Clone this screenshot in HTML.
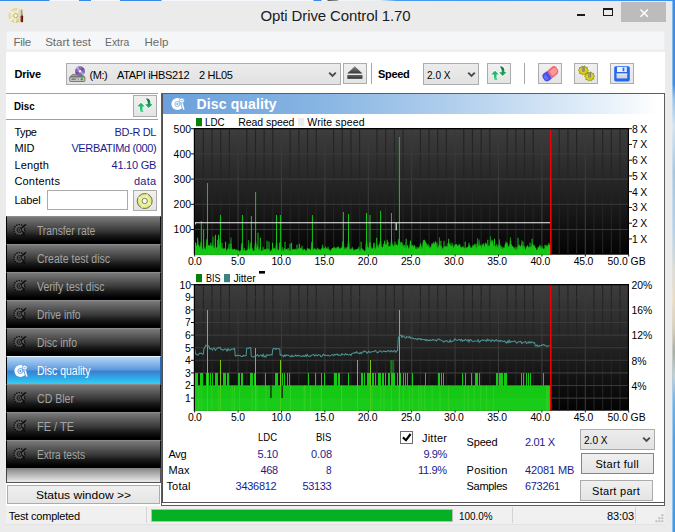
<!DOCTYPE html>
<html><head><meta charset="utf-8"><title>Opti Drive Control 1.70</title>
<style>
html,body{margin:0;padding:0}
body{width:675px;height:532px;position:relative;overflow:hidden;background:#ebebeb;font-family:"Liberation Sans",sans-serif;font-size:11px;color:#000}
.a{position:absolute;box-sizing:border-box}
.t{position:absolute;white-space:pre;line-height:16px;height:16px}
.btn{position:absolute;box-sizing:border-box;border:1px solid #acacac;background:linear-gradient(#f0f0f0,#e4e4e4)}
.nav{position:absolute;box-sizing:border-box;left:7px;width:154px;height:28px;border-top:1px solid #8c8c8c;border-left:1px solid #000;border-right:1px solid #111;background:linear-gradient(#7a7a7a 0%,#5a5a5a 25%,#3a3a3a 50%,#181818 70%,#000 92%)}
.nav.sel{border-top:1px solid #e4f6ff;border-left:1px solid #000;border-right:1px solid #2a6ab0;background:linear-gradient(#b4d4f4 0%,#86b6ea 25%,#5e98dc 47%,#3a7ed0 53%,#30a4e6 75%,#30d0f4 100%)}
svg{position:absolute;overflow:visible}
</style></head><body>
<div class="a" style="left:0;top:0;width:675px;height:1px;background:linear-gradient(90deg,#3a8ae8 0px,#3a8ae8 49px,#f4f7fb 50px,#f4f7fb 78.5px,#3a8ae8 79.5px,#3a8ae8 90.5px,#f4f7fb 91.5px,#f4f7fb 119.5px,#3a8ae8 120.5px,#3a8ae8 161px,#f4f7fb 162px,#f4f7fb 313px,#3a8ae8 314px,#3a8ae8 321px,#f4f7fb 322px,#f4f7fb 327px,#555 328px,#999 337px,#f4f7fb 339px,#e6f2ee 380px,#4a9af0 397px,#3a90f0 675px)"></div>
<div class="a" style="left:672px;top:0;width:1px;height:532px;opacity:0.55;background:linear-gradient(#3a8ef0 0,#3a8ef0 84px,#90c4f0 98px,#d0e4f4 126px,#a8c8e2 172px,#b4d2ea 230px,#ecdcc0 300px,#a6ada0 352px,#6ab4f0 402px,#3a9cf0 532px)"></div>
<div class="a" style="left:673px;top:0;width:2px;height:532px;background:linear-gradient(#3a8ef0 0,#3a8ef0 84px,#90c4f0 98px,#d0e4f4 126px,#bcd8ee 150px,#a8c8e2 172px,#b4d2ea 230px,#dcdcd2 270px,#ecdcc0 300px,#dccfb4 328px,#a6ada0 352px,#c6d2d6 376px,#6ab4f0 402px,#48a4f0 440px,#3a9cf0 532px)"></div>
<div class="a" style="left:621px;top:2px;width:45px;height:20px;background:#bcbcbc"></div>
<svg style="left:640px;top:8.6px" width="9" height="9" viewBox="0 0 9 9"><path d="M0.5 0.5 L7.9 7.7 M7.9 0.5 L0.5 7.7" stroke="#fff" stroke-width="1.5" fill="none"/></svg>
<div class="a" style="left:603px;top:8px;width:10px;height:8.4px;border:1px solid #1a1a1a;border-top-width:2.4px"></div>
<div class="a" style="left:577px;top:14px;width:8px;height:2.4px;background:#1a1a1a"></div>
<svg style="left:8px;top:8px" width="17" height="16" viewBox="0 0 17 16"><defs><radialGradient id="cdg" cx="0.42" cy="0.45" r="0.6"><stop offset="0" stop-color="#fbf6dc"/><stop offset="0.55" stop-color="#eadf9f"/><stop offset="1" stop-color="#cbbd7c"/></radialGradient></defs><circle cx="7.7" cy="7.6" r="7.3" fill="url(#cdg)"/><path d="M7.7 7.6 L1 4 L2.6 2.2 Z M7.7 7.6 L3 13.4 L1.6 11.6 Z M7.7 7.6 L9.4 0.6 L11.6 1.4 Z M7.7 7.6 L8 14.8 L5.8 14.6 Z" fill="#fffbe8" opacity="0.7"/><circle cx="7.7" cy="7.6" r="2" fill="#fafafa" stroke="#9c9c9c" stroke-width="0.9"/><path d="M10.6 2.2 L11.6 1.4 L11.9 13.8 L11 14.6 Z" fill="#f4f4f4" stroke="#c8c8c8" stroke-width="0.4"/><rect x="13.3" y="1.4" width="1.1" height="6.4" fill="#8a8a8a"/><rect x="12.7" y="7.4" width="2.4" height="6.8" rx="0.8" fill="#6e120e"/><rect x="13.1" y="7.8" width="0.7" height="6" fill="#a02a20"/></svg>
<div class="a" style="left:5.6px;top:31.4px;width:659.8px;height:19px;background:#f5f6f7;border:1px solid #f0f0f1"></div>
<div class="a" style="left:5.6px;top:50.4px;width:659.8px;height:473.4px;background:#fff"></div>
<div class="a" style="left:5.6px;top:50.4px;width:659.8px;height:1.2px;background:#ededed"></div>
<div class="btn" style="left:66px;top:63.4px;width:275.4px;height:21.2px;background:linear-gradient(#ececec,#e2e2e2)"></div>
<svg style="left:327.5px;top:72px" width="9" height="6" viewBox="0 0 9 6"><path d="M1.2 0.6 L4.5 4 L7.8 0.6" fill="none" stroke="#4a4a4a" stroke-width="1.9"/></svg>
<svg style="left:69px;top:66px" width="17" height="16" viewBox="0 0 17 16"><circle cx="11" cy="5.2" r="5" fill="#8468b4"/><path d="M11 5.2 L7 2.4 L9.4 0.6 Z M11 5.2 L15.4 7.4 L13.4 9.4 Z" fill="#c8b4e6" opacity="0.8"/><path d="M11 5.2 L13.8 1.2 L15.4 3.2 Z M11 5.2 L7.6 8.8 L6.2 6.6 Z" fill="#5e4888" opacity="0.7"/><circle cx="11" cy="5.2" r="1.3" fill="#f6f2fb"/><path d="M3.4 8.4 L8 8.4 L9 9.4 L14 9.4 L15.8 11.2 L0.8 11.2 Z" fill="#9a9a9a" stroke="#5a5a5a" stroke-width="0.6"/><rect x="0.7" y="11" width="15.2" height="4.4" rx="0.8" fill="#cfcfcf" stroke="#555" stroke-width="0.8"/><rect x="2.4" y="12.5" width="7.4" height="1.3" fill="#6a6a6a"/><rect x="6.6" y="12.7" width="2.6" height="0.9" fill="#eee"/><path d="M12.8 11.6 L14.4 13.2 L12.8 14.8 L11.2 13.2 Z" fill="#18b818"/></svg>
<div class="btn" style="left:343px;top:63px;width:24.4px;height:21px"></div>
<svg style="left:346.6px;top:66px" width="16" height="14" viewBox="0 0 16 14"><defs><linearGradient id="ej" x1="0" y1="0" x2="0" y2="1"><stop offset="0" stop-color="#8a8a8a"/><stop offset="1" stop-color="#333"/></linearGradient></defs><path d="M7.8 0.2 L15.4 7.6 L0.2 7.6 Z" fill="url(#ej)"/><rect x="0.4" y="9.2" width="15" height="3.6" fill="#333"/><rect x="0.4" y="10.4" width="15" height="0.8" fill="#6a6a6a"/></svg>
<div class="a" style="left:371.2px;top:63px;width:1.2px;height:21px;background:#a6a6a6"></div>
<div class="btn" style="left:423px;top:63.4px;width:56.4px;height:21.2px;background:linear-gradient(#ececec,#e2e2e2)"></div>
<svg style="left:466.6px;top:72px" width="9" height="6" viewBox="0 0 9 6"><path d="M1.2 0.6 L4.5 4 L7.8 0.6" fill="none" stroke="#4a4a4a" stroke-width="1.9"/></svg>
<div class="btn" style="left:487px;top:63px;width:24.4px;height:21px"></div>
<svg style="left:487px;top:63px" width="24" height="21" viewBox="0 0 24 21"><defs><linearGradient id="gu" x1="0" y1="0" x2="0" y2="1"><stop offset="0" stop-color="#1fb062"/><stop offset="0.6" stop-color="#2cc074"/><stop offset="1" stop-color="#58dc9c"/></linearGradient><linearGradient id="gd" x1="0" y1="0" x2="0" y2="1"><stop offset="0" stop-color="#0f5c32"/><stop offset="0.5" stop-color="#169a54"/><stop offset="1" stop-color="#1cac5e"/></linearGradient></defs><g stroke="#fff" stroke-width="1.3" stroke-linejoin="round" paint-order="stroke"><path d="M7.9 7.8 L11.9 11.6 L9.5 11.6 L9.6 15 L11 17.2 L7.6 17.2 L6.9 15 L6.9 11.6 L4 11.6 Z" fill="url(#gu)"/><path d="M15.6 13 L12.1 9.3 L14.7 9.3 L14.6 6.4 Q14 4.6 12.5 3.6 Q15.2 3.4 16.7 5 Q17.6 6.2 17.5 9.3 L19.7 9.3 Z" fill="url(#gd)"/></g></svg>
<div class="a" style="left:524px;top:63px;width:1.2px;height:21px;background:#a6a6a6"></div>
<div class="btn" style="left:538px;top:63px;width:24.2px;height:21px"></div>
<svg style="left:541px;top:65px" width="19" height="18" viewBox="0 0 19 18"><path d="M6.2 6 L11.4 1.6 Q13.4 0.4 15 2 L17.2 5.2 Q18 7.4 16.4 9 L10.8 13.4 Z" fill="#f4646e"/><path d="M8.2 6.4 L12.2 3 Q13.6 2.2 14.6 3.4 L16 5.6 Q16.4 7 15.4 8 L11.4 11.2 Z" fill="#fa969c"/><path d="M6.2 6 L10.8 13.4 L8 15.8 Q5.6 17.2 3.6 15.6 L1.6 12.6 Q0.6 10.2 2.6 8.6 Z" fill="#4650ec"/><path d="M4.6 9.6 L7.6 14 Q6 15.4 4.6 14.4 L3 12.2 Q2.8 10.6 4.6 9.6 Z" fill="#6a74f6"/></svg>
<div class="btn" style="left:574px;top:63px;width:24.2px;height:21px"></div>
<svg style="left:576.6px;top:65px" width="19" height="17" viewBox="0 0 19 17"><g fill="#d6cf1e" stroke="#8a8410" stroke-width="0.7" stroke-linejoin="round"><path d="M1.2 5.2 L2.6 4.2 L2.4 2.6 L4.2 2.6 L4.8 1 L6.4 1.8 L7.8 0.8 L8.6 2.4 L10.4 2.4 L10.2 4.2 L11.6 5.2 L10.4 6.4 L10.8 8 L9 8.2 L8.4 9.8 L6.8 9 L5.4 10 L4.4 8.6 L2.6 8.6 L2.8 6.8 Z"/><path d="M7.4 11.2 L8.8 10.2 L8.6 8.6 L10.4 8.6 L11 7 L12.6 7.8 L14 6.8 L14.8 8.4 L16.6 8.4 L16.4 10.2 L17.8 11.2 L16.6 12.4 L17 14 L15.2 14.2 L14.6 15.8 L13 15 L11.6 16 L10.6 14.6 L8.8 14.6 L9 12.8 Z"/></g><rect x="5.2" y="1.6" width="2.3" height="5" fill="#6a6a6a"/><rect x="5.6" y="1.6" width="0.8" height="4.6" fill="#bdbdbd"/><rect x="11.4" y="7.4" width="2.3" height="5" fill="#6a6a6a"/><rect x="11.8" y="7.4" width="0.8" height="4.6" fill="#bdbdbd"/></svg>
<div class="btn" style="left:610px;top:63px;width:24.2px;height:21px"></div>
<svg style="left:614px;top:66px" width="16" height="16" viewBox="0 0 16 16"><rect x="0.2" y="0.2" width="15.6" height="15.2" rx="1.6" fill="#2468f0"/><rect x="3" y="1" width="9.8" height="5" fill="#eef1f8"/><rect x="8.6" y="1.6" width="1.8" height="3.6" fill="#2a6af0"/><rect x="2.6" y="7.6" width="10.6" height="4.8" fill="#d5d7dc"/><rect x="2.6" y="7.6" width="10.6" height="1" fill="#f2f2f4"/></svg>
<div class="a" style="left:5.6px;top:93px;width:152.4px;height:1px;background:#a0a0a0"></div>
<div class="a" style="left:5.6px;top:119px;width:152.4px;height:1px;background:#a0a0a0"></div>
<div class="btn" style="left:133px;top:95.4px;width:24px;height:21.4px"></div>
<svg style="left:133px;top:95.4px" width="24" height="21" viewBox="0 0 24 21"><defs><linearGradient id="gu" x1="0" y1="0" x2="0" y2="1"><stop offset="0" stop-color="#1fb062"/><stop offset="0.6" stop-color="#2cc074"/><stop offset="1" stop-color="#58dc9c"/></linearGradient><linearGradient id="gd" x1="0" y1="0" x2="0" y2="1"><stop offset="0" stop-color="#0f5c32"/><stop offset="0.5" stop-color="#169a54"/><stop offset="1" stop-color="#1cac5e"/></linearGradient></defs><g stroke="#fff" stroke-width="1.3" stroke-linejoin="round" paint-order="stroke"><path d="M7.9 7.8 L11.9 11.6 L9.5 11.6 L9.6 15 L11 17.2 L7.6 17.2 L6.9 15 L6.9 11.6 L4 11.6 Z" fill="url(#gu)"/><path d="M15.6 13 L12.1 9.3 L14.7 9.3 L14.6 6.4 Q14 4.6 12.5 3.6 Q15.2 3.4 16.7 5 Q17.6 6.2 17.5 9.3 L19.7 9.3 Z" fill="url(#gd)"/></g></svg>
<div class="a" style="left:47px;top:190px;width:81.4px;height:19.6px;border:1px solid #ababab;background:#fff"></div>
<div class="btn" style="left:133.2px;top:190px;width:23.6px;height:21.4px"></div>
<svg style="left:133.2px;top:190px" width="24" height="22" viewBox="0 0 24 22"><defs><radialGradient id="cdy" cx="0.5" cy="0.5" r="0.5"><stop offset="0.35" stop-color="#f2f4a8"/><stop offset="0.8" stop-color="#e6ea8a"/><stop offset="1" stop-color="#d2d670"/></radialGradient></defs><circle cx="11.7" cy="11" r="7.5" fill="url(#cdy)" stroke="#55572c" stroke-width="0.8"/><path d="M11.7 11 L5 8 L5.6 6.4 Z M11.7 11 L18.4 14 L17.8 15.6 Z M11.7 11 L13.6 3.8 L15.2 4.6 Z M11.7 11 L9.8 18.2 L8.2 17.4 Z" fill="#fbfcd8" opacity="0.7"/><circle cx="11.7" cy="11" r="2.7" fill="#f4f6f0" stroke="#6e7a5a" stroke-width="0.9"/></svg>
<div class="nav" style="left:6.4px;top:216px;width:154.8px;height:28px"></div>
<svg style="left:13.4px;top:223.4px;opacity:1" width="15" height="14" viewBox="0 0 15 14"><circle cx="6.4" cy="7" r="5.4" fill="#6a6a6a" fill-opacity="0.55" stroke="#050505" stroke-width="1.3" stroke-dasharray="1.3 1.1"/><circle cx="6.4" cy="7" r="2.4" fill="none" stroke="#111" stroke-width="0.9"/><circle cx="6.4" cy="7" r="0.9" fill="#222"/><path d="M8 5.6 L13 1.2 M9.4 8 L11.6 12.8" stroke="#0a0a0a" stroke-width="1.3" fill="none"/></svg>
<div class="nav" style="left:6.4px;top:244px;width:154.8px;height:28px"></div>
<svg style="left:13.4px;top:251.4px;opacity:1" width="15" height="14" viewBox="0 0 15 14"><circle cx="6.4" cy="7" r="5.4" fill="#6a6a6a" fill-opacity="0.55" stroke="#050505" stroke-width="1.3" stroke-dasharray="1.3 1.1"/><circle cx="6.4" cy="7" r="2.4" fill="none" stroke="#111" stroke-width="0.9"/><circle cx="6.4" cy="7" r="0.9" fill="#222"/><path d="M8 5.6 L13 1.2 M9.4 8 L11.6 12.8" stroke="#0a0a0a" stroke-width="1.3" fill="none"/></svg>
<div class="nav" style="left:6.4px;top:272px;width:154.8px;height:28px"></div>
<svg style="left:13.4px;top:279.4px;opacity:1" width="15" height="14" viewBox="0 0 15 14"><circle cx="6.4" cy="7" r="5.4" fill="#6a6a6a" fill-opacity="0.55" stroke="#050505" stroke-width="1.3" stroke-dasharray="1.3 1.1"/><circle cx="6.4" cy="7" r="2.4" fill="none" stroke="#111" stroke-width="0.9"/><circle cx="6.4" cy="7" r="0.9" fill="#222"/><path d="M8 5.6 L13 1.2 M9.4 8 L11.6 12.8" stroke="#0a0a0a" stroke-width="1.3" fill="none"/></svg>
<div class="nav" style="left:6.4px;top:300px;width:154.8px;height:28px"></div>
<svg style="left:13.4px;top:307.4px;opacity:1" width="15" height="14" viewBox="0 0 15 14"><circle cx="6.4" cy="7" r="5.4" fill="#6a6a6a" fill-opacity="0.55" stroke="#050505" stroke-width="1.3" stroke-dasharray="1.3 1.1"/><circle cx="6.4" cy="7" r="2.4" fill="none" stroke="#111" stroke-width="0.9"/><circle cx="6.4" cy="7" r="0.9" fill="#222"/><path d="M8 5.6 L13 1.2 M9.4 8 L11.6 12.8" stroke="#0a0a0a" stroke-width="1.3" fill="none"/></svg>
<div class="nav" style="left:6.4px;top:328px;width:154.8px;height:28px"></div>
<svg style="left:13.4px;top:335.4px;opacity:1" width="15" height="14" viewBox="0 0 15 14"><circle cx="6.4" cy="7" r="5.4" fill="#6a6a6a" fill-opacity="0.55" stroke="#050505" stroke-width="1.3" stroke-dasharray="1.3 1.1"/><circle cx="6.4" cy="7" r="2.4" fill="none" stroke="#111" stroke-width="0.9"/><circle cx="6.4" cy="7" r="0.9" fill="#222"/><path d="M8 5.6 L13 1.2 M9.4 8 L11.6 12.8" stroke="#0a0a0a" stroke-width="1.3" fill="none"/></svg>
<div class="nav sel" style="left:6.4px;top:356px;width:154.8px;height:28px"></div>
<svg style="left:13.6px;top:364px;opacity:1" width="15" height="14" viewBox="0 0 15 14"><circle cx="6.4" cy="7" r="6" fill="#fff"/><circle cx="6.4" cy="7" r="2.5" fill="none" stroke="#4a8ad6" stroke-width="0.8"/><circle cx="6.4" cy="7" r="1" fill="#4a8ad6"/><path d="M10.6 6 L13.2 12.8" stroke="#4a8ad6" stroke-width="3" fill="none"/><path d="M10.9 6 L12.9 12.6" stroke="#fff" stroke-width="1.5" fill="none"/><circle cx="10.8" cy="3.6" r="2.5" fill="#fff" stroke="#4a8ad6" stroke-width="0.7"/><path d="M9.6 3.2 L10.4 4.4 L11 3 L11.8 4.2" stroke="#4a8ad6" stroke-width="0.5" fill="none"/></svg>
<div class="nav" style="left:6.4px;top:384px;width:154.8px;height:28px"></div>
<svg style="left:13.4px;top:391.4px;opacity:1" width="15" height="14" viewBox="0 0 15 14"><circle cx="6.4" cy="7" r="5.4" fill="#6a6a6a" fill-opacity="0.55" stroke="#050505" stroke-width="1.3" stroke-dasharray="1.3 1.1"/><circle cx="6.4" cy="7" r="2.4" fill="none" stroke="#111" stroke-width="0.9"/><circle cx="6.4" cy="7" r="0.9" fill="#222"/><path d="M8 5.6 L13 1.2 M9.4 8 L11.6 12.8" stroke="#0a0a0a" stroke-width="1.3" fill="none"/></svg>
<div class="nav" style="left:6.4px;top:412px;width:154.8px;height:28px"></div>
<svg style="left:13.4px;top:419.4px;opacity:1" width="15" height="14" viewBox="0 0 15 14"><circle cx="6.4" cy="7" r="5.4" fill="#6a6a6a" fill-opacity="0.55" stroke="#050505" stroke-width="1.3" stroke-dasharray="1.3 1.1"/><circle cx="6.4" cy="7" r="2.4" fill="none" stroke="#111" stroke-width="0.9"/><circle cx="6.4" cy="7" r="0.9" fill="#222"/><path d="M8 5.6 L13 1.2 M9.4 8 L11.6 12.8" stroke="#0a0a0a" stroke-width="1.3" fill="none"/></svg>
<div class="nav" style="left:6.4px;top:440px;width:154.8px;height:28px"></div>
<svg style="left:13.4px;top:447.4px;opacity:1" width="15" height="14" viewBox="0 0 15 14"><circle cx="6.4" cy="7" r="5.4" fill="#6a6a6a" fill-opacity="0.55" stroke="#050505" stroke-width="1.3" stroke-dasharray="1.3 1.1"/><circle cx="6.4" cy="7" r="2.4" fill="none" stroke="#111" stroke-width="0.9"/><circle cx="6.4" cy="7" r="0.9" fill="#222"/><path d="M8 5.6 L13 1.2 M9.4 8 L11.6 12.8" stroke="#0a0a0a" stroke-width="1.3" fill="none"/></svg>
<div class="a" style="left:6.4px;top:468px;width:154.8px;height:15px;background:linear-gradient(#7e7e7e,#8c8c8c 8%,#ececec);border-left:1px solid #444;border-right:1px solid #555;border-bottom:1.2px solid #555"></div>
<div class="btn" style="left:7px;top:485.4px;width:153.4px;height:18.4px"></div>
<div class="a" style="left:161px;top:93px;width:504px;height:413px;border:1px solid #5e5e5e;background:#fff"></div>
<div class="a" style="left:162px;top:94px;width:1.4px;height:409px;background:#505050"></div>
<div class="a" style="left:162px;top:502px;width:502px;height:1px;background:#555"></div>
<div class="a" style="left:163.4px;top:94px;width:500.6px;height:19.6px;background:linear-gradient(90deg,#6ba0da 0,#86b4e2 30%,#b4d1ee 60%,#e6f0fa 88%,#fff 99%)"></div>
<svg style="left:170.5px;top:96.9px;opacity:1" width="15" height="14" viewBox="0 0 15 14"><circle cx="6.4" cy="7" r="6" fill="#fff"/><circle cx="6.4" cy="7" r="2.5" fill="none" stroke="#6fa6dc" stroke-width="0.8"/><circle cx="6.4" cy="7" r="1" fill="#6fa6dc"/><path d="M10.6 6 L13.2 12.8" stroke="#6fa6dc" stroke-width="3" fill="none"/><path d="M10.9 6 L12.9 12.6" stroke="#fff" stroke-width="1.5" fill="none"/><circle cx="10.8" cy="3.6" r="2.5" fill="#fff" stroke="#6fa6dc" stroke-width="0.7"/><path d="M9.6 3.2 L10.4 4.4 L11 3 L11.8 4.2" stroke="#6fa6dc" stroke-width="0.5" fill="none"/></svg>
<div class="a" style="left:5.6px;top:506px;width:659.8px;height:18px;background:#f0f0f0"></div>
<div class="a" style="left:5.6px;top:524px;width:659.8px;height:1px;background:#e2e2e2"></div>
<div class="a" style="left:400px;top:431px;width:13px;height:13px;border:1px solid #6e6e6e;background:#fff"></div>
<svg style="left:400px;top:431px" width="13" height="13" viewBox="0 0 13 13"><path d="M2.9 6.4 L6 9.2 L10.6 3" fill="none" stroke="#000" stroke-width="2.1"/></svg>
<div class="btn" style="left:580px;top:429px;width:74.6px;height:20.6px;background:linear-gradient(#ececec,#e2e2e2)"></div>
<svg style="left:641.6px;top:437px" width="9" height="6" viewBox="0 0 9 6"><path d="M1.2 0.6 L4.5 4 L7.8 0.6" fill="none" stroke="#4a4a4a" stroke-width="1.9"/></svg>
<div class="btn" style="left:581px;top:453.4px;width:72.8px;height:20.4px;border:1.4px solid #3c96e8"></div>
<div class="btn" style="left:580px;top:480.4px;width:72.8px;height:20.4px"></div>
<div class="a" style="left:146px;top:507px;width:1px;height:16px;background:#d4d4d4"></div>
<div class="a" style="left:151px;top:509px;width:302px;height:13px;border:1px solid #bcbcbc;background:#06b025"></div>
<div class="a" style="left:512px;top:507px;width:1px;height:16px;background:#d4d4d4"></div>
<div class="a" style="left:635px;top:507px;width:1px;height:16px;background:#d4d4d4"></div>
<svg style="left:654px;top:513px" width="10" height="10" viewBox="0 0 10 10"><g fill="#bfbfbf"><rect x="7.4" y="1.2" width="2" height="2"/><rect x="4.4" y="4.2" width="2" height="2"/><rect x="7.4" y="4.2" width="2" height="2"/><rect x="1.4" y="7.2" width="2" height="2"/><rect x="4.4" y="7.2" width="2" height="2"/><rect x="7.4" y="7.2" width="2" height="2"/></g></svg>
<svg style="left:0;top:0" width="675" height="532" viewBox="0 0 675 532">
<defs><linearGradient id="bg" x1="0" y1="0" x2="0" y2="1"><stop offset="0" stop-color="#3d3d3d"/><stop offset="0.55" stop-color="#1f1f1f"/><stop offset="1" stop-color="#020202"/></linearGradient></defs>
<rect x="194.4" y="128.7" width="434" height="126" fill="url(#bg)"/>
<path d="M203.38 128.7 V254.7 M212.06 128.7 V254.7 M220.74 128.7 V254.7 M229.42 128.7 V254.7 M246.78 128.7 V254.7 M255.46 128.7 V254.7 M264.14 128.7 V254.7 M272.82 128.7 V254.7 M290.18 128.7 V254.7 M298.86 128.7 V254.7 M307.54 128.7 V254.7 M316.22 128.7 V254.7 M333.58 128.7 V254.7 M342.26 128.7 V254.7 M350.94 128.7 V254.7 M359.62 128.7 V254.7 M376.98 128.7 V254.7 M385.66 128.7 V254.7 M394.34 128.7 V254.7 M403.02 128.7 V254.7 M420.38 128.7 V254.7 M429.06 128.7 V254.7 M437.74 128.7 V254.7 M446.42 128.7 V254.7 M463.78 128.7 V254.7 M472.46 128.7 V254.7 M481.14 128.7 V254.7 M489.82 128.7 V254.7 M507.18 128.7 V254.7 M515.86 128.7 V254.7 M524.54 128.7 V254.7 M533.22 128.7 V254.7 M550.58 128.7 V254.7 M559.26 128.7 V254.7 M567.94 128.7 V254.7 M576.62 128.7 V254.7 M593.98 128.7 V254.7 M602.66 128.7 V254.7 M611.34 128.7 V254.7 M620.02 128.7 V254.7" stroke="#242424" stroke-width="1.1" fill="none"/>
<path d="M238.10 128.7 V254.7 M281.50 128.7 V254.7 M324.90 128.7 V254.7 M368.30 128.7 V254.7 M411.70 128.7 V254.7 M455.10 128.7 V254.7 M498.50 128.7 V254.7 M541.90 128.7 V254.7 M585.30 128.7 V254.7 M194.4 229.50 H628.4 M194.4 204.30 H628.4 M194.4 179.10 H628.4 M194.4 153.90 H628.4" stroke="#3a3a3a" stroke-width="1.1" fill="none"/>
<path d="M195.0 254.7 L195.0 242.6 L195.5 242.7 L196.0 243.1 L196.5 246.1 L197.0 246.1 L197.5 245.5 L198.0 244.3 L198.5 245.2 L199.0 245.5 L199.5 247.3 L200.0 247.3 L200.5 244.6 L201.0 241.7 L201.5 244.6 L202.0 249.2 L202.5 249.8 L203.0 247.2 L203.5 239.6 L204.0 246.6 L204.5 248.6 L205.0 249.1 L205.5 249.5 L206.0 246.8 L206.5 239.2 L207.0 241.9 L207.5 240.3 L208.0 245.7 L208.5 245.6 L209.0 245.1 L209.5 245.2 L210.0 246.8 L210.5 245.2 L211.0 246.5 L211.5 245.9 L212.0 245.5 L212.5 245.7 L213.0 236.4 L213.5 248.0 L214.0 247.8 L214.5 248.5 L215.0 245.7 L215.5 247.7 L216.0 247.2 L216.5 247.8 L217.0 248.6 L217.5 246.4 L218.0 245.7 L218.5 248.0 L219.0 247.0 L219.5 242.8 L220.0 238.4 L220.5 242.8 L221.0 247.1 L221.5 249.1 L222.0 248.8 L222.5 247.8 L223.0 248.9 L223.5 248.6 L224.0 249.4 L224.5 248.2 L225.0 248.8 L225.5 248.8 L226.0 250.3 L226.5 251.4 L227.0 249.4 L227.5 249.0 L228.0 249.2 L228.5 247.5 L229.0 250.1 L229.5 249.5 L230.0 248.7 L230.5 249.1 L231.0 237.5 L231.5 249.2 L232.0 248.4 L232.5 249.9 L233.0 249.8 L233.5 249.4 L234.0 249.0 L234.5 249.2 L235.0 248.9 L235.5 250.4 L236.0 249.5 L236.5 249.8 L237.0 250.5 L237.5 250.2 L238.0 251.1 L238.5 250.7 L239.0 250.3 L239.5 251.8 L240.0 251.3 L240.5 251.1 L241.0 249.9 L241.5 243.5 L242.0 243.4 L242.5 243.2 L243.0 250.1 L243.5 251.2 L244.0 249.3 L244.5 248.0 L245.0 251.1 L245.5 250.7 L246.0 250.8 L246.5 250.5 L247.0 250.2 L247.5 249.9 L248.0 248.0 L248.5 240.1 L249.0 249.6 L249.5 248.9 L250.0 248.4 L250.5 243.1 L251.0 242.4 L251.5 243.1 L252.0 249.2 L252.5 248.4 L253.0 251.0 L253.5 250.9 L254.0 250.7 L254.5 250.0 L255.0 242.8 L255.5 242.1 L256.0 241.9 L256.5 249.3 L257.0 248.1 L257.5 244.8 L258.0 248.1 L258.5 249.6 L259.0 250.7 L259.5 249.6 L260.0 247.0 L260.5 249.6 L261.0 251.1 L261.5 251.0 L262.0 250.6 L262.5 250.4 L263.0 246.7 L263.5 249.9 L264.0 250.2 L264.5 249.3 L265.0 249.3 L265.5 249.3 L266.0 249.3 L266.5 250.5 L267.0 248.4 L267.5 250.5 L268.0 248.8 L268.5 250.6 L269.0 248.8 L269.5 250.8 L270.0 250.8 L270.5 251.8 L271.0 250.3 L271.5 250.9 L272.0 248.9 L272.5 249.3 L273.0 248.8 L273.5 248.8 L274.0 248.1 L274.5 248.1 L275.0 249.1 L275.5 251.3 L276.0 243.7 L276.5 242.5 L277.0 242.8 L277.5 248.7 L278.0 250.4 L278.5 250.1 L279.0 249.7 L279.5 242.8 L280.0 242.4 L280.5 242.8 L281.0 251.9 L281.5 251.1 L282.0 250.3 L282.5 247.1 L283.0 251.6 L283.5 250.7 L284.0 248.5 L284.5 248.8 L285.0 248.8 L285.5 249.1 L286.0 250.2 L286.5 249.1 L287.0 249.4 L287.5 250.0 L288.0 247.8 L288.5 248.8 L289.0 251.3 L289.5 250.8 L290.0 249.8 L290.5 251.4 L291.0 250.6 L291.5 249.3 L292.0 250.4 L292.5 249.6 L293.0 249.0 L293.5 249.1 L294.0 249.9 L294.5 249.7 L295.0 249.1 L295.5 248.8 L296.0 250.1 L296.5 250.3 L297.0 249.2 L297.5 249.2 L298.0 249.4 L298.5 248.3 L299.0 248.8 L299.5 248.7 L300.0 247.5 L300.5 248.1 L301.0 249.2 L301.5 248.3 L302.0 248.8 L302.5 250.4 L303.0 249.3 L303.5 250.5 L304.0 249.6 L304.5 248.8 L305.0 249.8 L305.5 250.4 L306.0 251.6 L306.5 250.2 L307.0 249.5 L307.5 247.8 L308.0 248.7 L308.5 249.1 L309.0 248.7 L309.5 249.0 L310.0 249.3 L310.5 250.4 L311.0 249.4 L311.5 242.8 L312.0 241.8 L312.5 242.8 L313.0 248.6 L313.5 249.3 L314.0 250.0 L314.5 248.1 L315.0 248.6 L315.5 249.2 L316.0 249.7 L316.5 249.3 L317.0 250.7 L317.5 248.3 L318.0 247.7 L318.5 249.8 L319.0 249.1 L319.5 249.9 L320.0 249.2 L320.5 250.8 L321.0 249.4 L321.5 248.3 L322.0 248.7 L322.5 244.6 L323.0 246.8 L323.5 249.2 L324.0 248.5 L324.5 248.8 L325.0 247.9 L325.5 246.6 L326.0 248.3 L326.5 248.3 L327.0 248.8 L327.5 249.2 L328.0 246.6 L328.5 248.7 L329.0 250.1 L329.5 249.7 L330.0 249.6 L330.5 251.5 L331.0 250.7 L331.5 249.1 L332.0 248.3 L332.5 248.5 L333.0 247.7 L333.5 247.9 L334.0 247.2 L334.5 246.9 L335.0 248.5 L335.5 247.9 L336.0 249.8 L336.5 247.7 L337.0 247.2 L337.5 247.3 L338.0 247.5 L338.5 246.4 L339.0 248.5 L339.5 248.7 L340.0 248.7 L340.5 248.3 L341.0 248.0 L341.5 247.2 L342.0 248.4 L342.5 241.9 L343.0 241.1 L343.5 241.9 L344.0 250.1 L344.5 248.7 L345.0 247.3 L345.5 248.4 L346.0 249.5 L346.5 248.1 L347.0 247.1 L347.5 247.7 L348.0 242.5 L348.5 240.2 L349.0 242.5 L349.5 248.1 L350.0 249.8 L350.5 248.9 L351.0 250.0 L351.5 249.1 L352.0 247.6 L352.5 247.5 L353.0 249.1 L353.5 249.9 L354.0 250.7 L354.5 249.8 L355.0 249.4 L355.5 249.3 L356.0 250.0 L356.5 249.6 L357.0 249.1 L357.5 248.8 L358.0 249.2 L358.5 248.5 L359.0 246.5 L359.5 250.5 L360.0 251.6 L360.5 250.3 L361.0 248.6 L361.5 248.0 L362.0 248.3 L362.5 249.3 L363.0 250.3 L363.5 249.7 L364.0 250.4 L364.5 251.9 L365.0 250.5 L365.5 250.6 L366.0 242.2 L366.5 238.5 L367.0 242.2 L367.5 246.9 L368.0 247.2 L368.5 248.1 L369.0 248.9 L369.5 242.8 L370.0 242.3 L370.5 242.8 L371.0 247.8 L371.5 247.6 L372.0 249.2 L372.5 249.0 L373.0 247.8 L373.5 247.4 L374.0 243.4 L374.5 248.3 L375.0 248.2 L375.5 249.4 L376.0 246.8 L376.5 246.9 L377.0 244.3 L377.5 245.9 L378.0 247.6 L378.5 247.8 L379.0 244.2 L379.5 245.1 L380.0 241.5 L380.5 240.8 L381.0 241.5 L381.5 246.3 L382.0 246.8 L382.5 247.5 L383.0 246.9 L383.5 243.7 L384.0 244.9 L384.5 243.8 L385.0 244.7 L385.5 244.5 L386.0 243.4 L386.5 244.6 L387.0 246.1 L387.5 247.8 L388.0 247.2 L388.5 246.4 L389.0 247.0 L389.5 245.9 L390.0 246.1 L390.5 246.3 L391.0 242.2 L391.5 238.9 L392.0 242.2 L392.5 245.0 L393.0 244.9 L393.5 247.6 L394.0 245.5 L394.5 245.2 L395.0 245.7 L395.5 244.7 L396.0 244.0 L396.5 244.5 L397.0 245.6 L397.5 245.8 L398.0 244.7 L398.5 238.9 L399.0 241.6 L399.5 240.3 L400.0 247.0 L400.5 242.3 L401.0 242.6 L401.5 241.8 L402.0 244.6 L402.5 245.5 L403.0 245.9 L403.5 245.3 L404.0 248.4 L404.5 244.7 L405.0 245.1 L405.5 247.9 L406.0 247.5 L406.5 248.9 L407.0 245.9 L407.5 245.0 L408.0 246.2 L408.5 248.9 L409.0 248.4 L409.5 246.6 L410.0 243.4 L410.5 240.7 L411.0 243.4 L411.5 246.1 L412.0 245.8 L412.5 245.0 L413.0 246.8 L413.5 247.4 L414.0 244.8 L414.5 246.1 L415.0 245.9 L415.5 248.8 L416.0 248.9 L416.5 249.2 L417.0 246.6 L417.5 248.8 L418.0 248.3 L418.5 248.7 L419.0 246.8 L419.5 248.3 L420.0 244.6 L420.5 243.1 L421.0 246.2 L421.5 246.0 L422.0 249.7 L422.5 245.6 L423.0 242.0 L423.5 240.0 L424.0 240.3 L424.5 242.2 L425.0 242.3 L425.5 241.3 L426.0 244.0 L426.5 243.1 L427.0 246.5 L427.5 245.5 L428.0 244.0 L428.5 247.2 L429.0 245.2 L429.5 247.6 L430.0 248.4 L430.5 246.9 L431.0 247.0 L431.5 244.7 L432.0 243.2 L432.5 244.8 L433.0 243.6 L433.5 241.9 L434.0 244.3 L434.5 243.7 L435.0 242.6 L435.5 241.0 L436.0 242.4 L436.5 245.9 L437.0 246.6 L437.5 247.8 L438.0 247.9 L438.5 246.3 L439.0 244.8 L439.5 237.4 L440.0 246.4 L440.5 246.1 L441.0 245.3 L441.5 246.4 L442.0 247.5 L442.5 250.0 L443.0 247.8 L443.5 247.7 L444.0 248.0 L444.5 246.3 L445.0 247.3 L445.5 245.7 L446.0 247.3 L446.5 246.6 L447.0 247.4 L447.5 245.4 L448.0 242.9 L448.5 244.4 L449.0 243.2 L449.5 244.4 L450.0 243.3 L450.5 245.3 L451.0 246.0 L451.5 246.7 L452.0 246.1 L452.5 245.7 L453.0 244.7 L453.5 247.9 L454.0 247.5 L454.5 246.1 L455.0 244.6 L455.5 244.7 L456.0 243.9 L456.5 244.1 L457.0 245.6 L457.5 245.9 L458.0 245.5 L458.5 246.3 L459.0 244.3 L459.5 244.9 L460.0 244.3 L460.5 248.1 L461.0 246.9 L461.5 247.9 L462.0 247.0 L462.5 247.2 L463.0 246.1 L463.5 247.8 L464.0 248.0 L464.5 247.7 L465.0 248.6 L465.5 248.9 L466.0 247.8 L466.5 248.2 L467.0 246.9 L467.5 247.4 L468.0 247.2 L468.5 245.3 L469.0 242.8 L469.5 246.3 L470.0 245.4 L470.5 247.8 L471.0 248.0 L471.5 247.7 L472.0 247.5 L472.5 246.8 L473.0 245.1 L473.5 246.0 L474.0 245.7 L474.5 244.0 L475.0 244.3 L475.5 245.6 L476.0 248.4 L476.5 247.3 L477.0 248.0 L477.5 238.1 L478.0 246.1 L478.5 246.1 L479.0 239.5 L479.5 244.5 L480.0 246.1 L480.5 246.2 L481.0 244.5 L481.5 249.2 L482.0 245.4 L482.5 244.8 L483.0 243.8 L483.5 243.3 L484.0 246.1 L484.5 247.4 L485.0 244.1 L485.5 242.4 L486.0 245.0 L486.5 243.6 L487.0 244.2 L487.5 247.8 L488.0 245.0 L488.5 245.8 L489.0 247.0 L489.5 245.7 L490.0 244.7 L490.5 236.4 L491.0 243.2 L491.5 241.5 L492.0 239.8 L492.5 240.6 L493.0 241.8 L493.5 245.5 L494.0 246.3 L494.5 247.5 L495.0 246.0 L495.5 245.7 L496.0 247.4 L496.5 244.1 L497.0 245.1 L497.5 246.6 L498.0 248.7 L498.5 244.9 L499.0 244.4 L499.5 239.3 L500.0 246.8 L500.5 245.4 L501.0 249.0 L501.5 246.7 L502.0 246.2 L502.5 248.8 L503.0 248.9 L503.5 247.3 L504.0 248.3 L504.5 247.7 L505.0 244.6 L505.5 243.6 L506.0 241.6 L506.5 243.3 L507.0 243.9 L507.5 242.8 L508.0 248.0 L508.5 246.0 L509.0 247.4 L509.5 245.1 L510.0 243.4 L510.5 237.3 L511.0 245.7 L511.5 244.0 L512.0 246.0 L512.5 246.5 L513.0 246.1 L513.5 247.6 L514.0 248.7 L514.5 247.5 L515.0 249.8 L515.5 249.3 L516.0 246.7 L516.5 249.1 L517.0 250.6 L517.5 247.1 L518.0 247.0 L518.5 246.6 L519.0 244.3 L519.5 245.0 L520.0 246.2 L520.5 247.3 L521.0 245.3 L521.5 245.3 L522.0 240.4 L522.5 248.5 L523.0 247.1 L523.5 245.4 L524.0 249.1 L524.5 246.0 L525.0 249.2 L525.5 250.1 L526.0 248.4 L526.5 246.7 L527.0 246.3 L527.5 245.4 L528.0 246.1 L528.5 247.0 L529.0 248.2 L529.5 246.9 L530.0 246.9 L530.5 246.9 L531.0 247.0 L531.5 246.5 L532.0 243.8 L532.5 243.5 L533.0 244.8 L533.5 245.5 L534.0 246.4 L534.5 244.8 L535.0 247.7 L535.5 247.5 L536.0 248.2 L536.5 250.9 L537.0 249.5 L537.5 249.5 L538.0 246.7 L538.5 247.9 L539.0 247.4 L539.5 245.7 L540.0 244.7 L540.5 246.9 L541.0 248.6 L541.5 248.4 L542.0 245.7 L542.5 248.3 L543.0 248.8 L543.5 248.7 L544.0 249.2 L544.5 248.4 L545.0 249.3 L545.5 245.6 L546.0 247.0 L546.5 245.0 L547.0 247.1 L547.5 246.2 L548.0 244.9 L548.5 244.5 L549.0 242.9 L549.5 245.3 L550.0 245.2 L550.5 244.8 L550.4 254.7 Z" fill="#14c814" stroke="#14c814" stroke-width="0.4" stroke-linejoin="round"/>
<path d="M207.5 254.7 V182.9 M201.3 254.7 V220.9 M220.4 254.7 V215.1 M242.4 254.7 V215.1 M251.4 254.7 V215.9 M255.6 254.7 V191.9 M276.5 254.7 V215.1 M280.4 254.7 V215.1 M312.4 254.7 V215.1 M343.4 254.7 V211.9 M348.5 254.7 V214.1 M366.5 254.7 V213.1 M370.0 254.7 V215.1 M380.6 254.7 V210.8 M391.5 254.7 V213.1 M399.4 254.7 V137.1 M197.6 254.7 V237.7 M203.6 254.7 V229.7 M215.5 254.7 V234.7 M218.5 254.7 V234.7 M222.0 254.7 V242.7 M258.0 254.7 V232.7 M229.0 254.7 V243.7 M210.8 254.7 V242.7 M267.0 254.7 V240.7 M272.5 254.7 V242.7 M285.0 254.7 V241.7 M290.0 254.7 V243.7 M297.0 254.7 V244.7 M302.0 254.7 V245.7 M384.5 254.7 V240.7 M388.0 254.7 V241.7 M374.0 254.7 V242.7 M395.0 254.7 V241.7 M402.0 254.7 V242.7 M406.0 254.7 V241.7 M444.0 254.7 V240.7 M448.5 254.7 V241.7 M452.0 254.7 V242.7 M437.0 254.7 V242.7 M494.5 254.7 V238.7 M518.0 254.7 V237.7 M523.0 254.7 V241.7 M530.0 254.7 V242.7 M476.0 254.7 V243.7 M545.0 254.7 V244.7 M197.9 254.7 V240.7 M215.2 254.7 V236.7 M217.8 254.7 V239.7 M225.6 254.7 V241.7 M230.9 254.7 V243.7 M260.4 254.7 V237.7 M269.0 254.7 V241.7 M272.5 254.7 V242.7 M291.6 254.7 V242.7 M299.4 254.7 V243.7 M361.1 254.7 V241.7 M376.7 254.7 V237.7 M387.1 254.7 V239.7 M406.2 254.7 V238.7 M410.5 254.7 V240.7 M424.4 254.7 V239.7 M440.9 254.7 V240.7 M448.7 254.7 V238.7 M465.2 254.7 V241.7 M487.8 254.7 V239.7 M510.4 254.7 V240.7 M532.1 254.7 V238.7" stroke="#16c016" stroke-width="1.05" fill="none"/>
<path d="M195.2 224.4 V222.8 H396.2 V230.2 M396.2 222.8 H550.4" stroke="#f6f6f6" stroke-width="1.1" fill="none"/>
<rect x="550" y="128.7" width="1.5" height="126" fill="#f00000"/>
<rect x="194.4" y="284.7" width="434" height="126" fill="url(#bg)"/>
<path d="M203.38 284.7 V410.7 M212.06 284.7 V410.7 M220.74 284.7 V410.7 M229.42 284.7 V410.7 M246.78 284.7 V410.7 M255.46 284.7 V410.7 M264.14 284.7 V410.7 M272.82 284.7 V410.7 M290.18 284.7 V410.7 M298.86 284.7 V410.7 M307.54 284.7 V410.7 M316.22 284.7 V410.7 M333.58 284.7 V410.7 M342.26 284.7 V410.7 M350.94 284.7 V410.7 M359.62 284.7 V410.7 M376.98 284.7 V410.7 M385.66 284.7 V410.7 M394.34 284.7 V410.7 M403.02 284.7 V410.7 M420.38 284.7 V410.7 M429.06 284.7 V410.7 M437.74 284.7 V410.7 M446.42 284.7 V410.7 M463.78 284.7 V410.7 M472.46 284.7 V410.7 M481.14 284.7 V410.7 M489.82 284.7 V410.7 M507.18 284.7 V410.7 M515.86 284.7 V410.7 M524.54 284.7 V410.7 M533.22 284.7 V410.7 M550.58 284.7 V410.7 M559.26 284.7 V410.7 M567.94 284.7 V410.7 M576.62 284.7 V410.7 M593.98 284.7 V410.7 M602.66 284.7 V410.7 M611.34 284.7 V410.7 M620.02 284.7 V410.7" stroke="#242424" stroke-width="1.1" fill="none"/>
<path d="M238.10 284.7 V410.7 M281.50 284.7 V410.7 M324.90 284.7 V410.7 M368.30 284.7 V410.7 M411.70 284.7 V410.7 M455.10 284.7 V410.7 M498.50 284.7 V410.7 M541.90 284.7 V410.7 M585.30 284.7 V410.7 M194.4 398.10 H628.4 M194.4 385.50 H628.4 M194.4 372.90 H628.4 M194.4 360.30 H628.4 M194.4 347.70 H628.4 M194.4 335.10 H628.4 M194.4 322.50 H628.4 M194.4 309.90 H628.4 M194.4 297.30 H628.4" stroke="#3a3a3a" stroke-width="1.1" fill="none"/>
<rect x="195" y="385.50" width="355.40" height="25.20" fill="#14c814"/>
<rect x="195" y="398.10" width="355.40" height="12.60" fill="#1dd01d" opacity="0.55"/>
<path d="M195 372.90 h3 v13.10 h-3 z M200 372.90 h3 v13.10 h-3 z M206 372.90 h3 v13.10 h-3 z M210 372.90 h1 v13.10 h-1 z M212 372.90 h1 v13.10 h-1 z M215 372.90 h3 v13.10 h-3 z M223 372.90 h3 v13.10 h-3 z M227 372.90 h2 v13.10 h-2 z M238 372.90 h2 v13.10 h-2 z M241 372.90 h2 v13.10 h-2 z M250 372.90 h3 v13.10 h-3 z M254 372.90 h2 v13.10 h-2 z M265 372.90 h1 v13.10 h-1 z M275 372.90 h3 v13.10 h-3 z M280 372.90 h1 v13.10 h-1 z M282 372.90 h1 v13.10 h-1 z M284 372.90 h1 v13.10 h-1 z M287 372.90 h1 v13.10 h-1 z M289 372.90 h1 v13.10 h-1 z M308 372.90 h1 v13.10 h-1 z M315 372.90 h1 v13.10 h-1 z M321 372.90 h1 v13.10 h-1 z M324 372.90 h1 v13.10 h-1 z M334 372.90 h3 v13.10 h-3 z M338 372.90 h2 v13.10 h-2 z M348 372.90 h1 v13.10 h-1 z M361 372.90 h2 v13.10 h-2 z M364 372.90 h1 v13.10 h-1 z M367 372.90 h4 v13.10 h-4 z M372 372.90 h2 v13.10 h-2 z M375 372.90 h1 v13.10 h-1 z M378 372.90 h3 v13.10 h-3 z M382 372.90 h2 v13.10 h-2 z M385 372.90 h1 v13.10 h-1 z M388 372.90 h2 v13.10 h-2 z M391 372.90 h4 v13.10 h-4 z M397 372.90 h1 v13.10 h-1 z M400 372.90 h1 v13.10 h-1 z M403 372.90 h1 v13.10 h-1 z M405 372.90 h1 v13.10 h-1 z M407 372.90 h1 v13.10 h-1 z M412 372.90 h1 v13.10 h-1 z M425 372.90 h1 v13.10 h-1 z M438 372.90 h2 v13.10 h-2 z M441 372.90 h1 v13.10 h-1 z M443 372.90 h1 v13.10 h-1 z M462 372.90 h1 v13.10 h-1 z M465 372.90 h1 v13.10 h-1 z M471 372.90 h1 v13.10 h-1 z M475 372.90 h3 v13.10 h-3 z M479 372.90 h1 v13.10 h-1 z M496 372.90 h2 v13.10 h-2 z M499 372.90 h4 v13.10 h-4 z M504 372.90 h3 v13.10 h-3 z M521 372.90 h1 v13.10 h-1 z M523 372.90 h1 v13.10 h-1 z M526 372.90 h1 v13.10 h-1 z M528 372.90 h1 v13.10 h-1 z M530 372.90 h1 v13.10 h-1 z M543 372.90 h1 v13.10 h-1 z" fill="#14c814" shape-rendering="crispEdges"/>
<path d="M390.6 360.30 h1 v13.10 h-1 z M392.6 360.30 h0.9 v13.10 h-0.9 z" fill="#14c814"/>
<rect x="270.4" y="385.50" width="1.1" height="12.60" fill="#0a0a0a"/>
<rect x="281.6" y="385.50" width="1.1" height="12.60" fill="#0a0a0a"/>
<rect x="207" y="309.90" width="1" height="75.60" fill="#78c60c" shape-rendering="crispEdges"/>
<rect x="207" y="385.50" width="1" height="25.20" fill="#6fd41a" opacity="0.5" shape-rendering="crispEdges"/>
<rect x="220" y="360.30" width="1" height="25.20" fill="#78c60c" shape-rendering="crispEdges"/>
<rect x="220" y="385.50" width="1" height="25.20" fill="#6fd41a" opacity="0.5" shape-rendering="crispEdges"/>
<rect x="255" y="347.70" width="1" height="37.80" fill="#78c60c" shape-rendering="crispEdges"/>
<rect x="255" y="385.50" width="1" height="25.20" fill="#6fd41a" opacity="0.5" shape-rendering="crispEdges"/>
<rect x="280" y="360.30" width="1" height="25.20" fill="#78c60c" shape-rendering="crispEdges"/>
<rect x="280" y="385.50" width="1" height="25.20" fill="#6fd41a" opacity="0.5" shape-rendering="crispEdges"/>
<rect x="357" y="360.30" width="1" height="25.20" fill="#78c60c" shape-rendering="crispEdges"/>
<rect x="357" y="385.50" width="1" height="25.20" fill="#6fd41a" opacity="0.5" shape-rendering="crispEdges"/>
<rect x="370" y="360.30" width="1" height="25.20" fill="#78c60c" shape-rendering="crispEdges"/>
<rect x="370" y="385.50" width="1" height="25.20" fill="#6fd41a" opacity="0.5" shape-rendering="crispEdges"/>
<rect x="399" y="309.90" width="1" height="75.60" fill="#78c60c" shape-rendering="crispEdges"/>
<rect x="399" y="385.50" width="1" height="25.20" fill="#6fd41a" opacity="0.5" shape-rendering="crispEdges"/>
<rect x="418.2" y="385.50" width="1" height="25.20" fill="#3fd22a" opacity="0.7"/>
<rect x="408.7" y="385.50" width="1" height="25.20" fill="#3fd22a" opacity="0.7"/>
<rect x="320.7" y="385.50" width="1" height="25.20" fill="#3fd22a" opacity="0.7"/>
<rect x="546.2" y="385.50" width="1" height="25.20" fill="#3fd22a" opacity="0.7"/>
<rect x="420.5" y="385.50" width="1" height="25.20" fill="#3fd22a" opacity="0.7"/>
<rect x="211.3" y="385.50" width="1" height="25.20" fill="#3fd22a" opacity="0.7"/>
<rect x="341.2" y="385.50" width="1" height="25.20" fill="#3fd22a" opacity="0.7"/>
<rect x="473.6" y="385.50" width="1" height="25.20" fill="#3fd22a" opacity="0.7"/>
<rect x="304.4" y="385.50" width="1" height="25.20" fill="#3fd22a" opacity="0.7"/>
<rect x="439.5" y="385.50" width="1" height="25.20" fill="#3fd22a" opacity="0.7"/>
<rect x="197.8" y="385.50" width="1" height="25.20" fill="#3fd22a" opacity="0.7"/>
<rect x="303.6" y="385.50" width="1" height="25.20" fill="#3fd22a" opacity="0.7"/>
<rect x="492.8" y="385.50" width="1" height="25.20" fill="#3fd22a" opacity="0.7"/>
<rect x="402.7" y="385.50" width="1" height="25.20" fill="#3fd22a" opacity="0.7"/>
<rect x="431.6" y="385.50" width="1" height="25.20" fill="#3fd22a" opacity="0.7"/>
<rect x="265.6" y="385.50" width="1" height="25.20" fill="#3fd22a" opacity="0.7"/>
<rect x="371.6" y="385.50" width="1" height="25.20" fill="#3fd22a" opacity="0.7"/>
<rect x="391.1" y="385.50" width="1" height="25.20" fill="#3fd22a" opacity="0.7"/>
<rect x="290.0" y="385.50" width="1" height="25.20" fill="#3fd22a" opacity="0.7"/>
<rect x="424.1" y="385.50" width="1" height="25.20" fill="#3fd22a" opacity="0.7"/>
<rect x="383.5" y="385.50" width="1" height="25.20" fill="#3fd22a" opacity="0.7"/>
<rect x="547.4" y="385.50" width="1" height="25.20" fill="#3fd22a" opacity="0.7"/>
<rect x="398.6" y="385.50" width="1" height="25.20" fill="#3fd22a" opacity="0.7"/>
<rect x="341.1" y="385.50" width="1" height="25.20" fill="#3fd22a" opacity="0.7"/>
<rect x="239.2" y="385.50" width="1" height="25.20" fill="#3fd22a" opacity="0.7"/>
<rect x="251.6" y="385.50" width="1" height="25.20" fill="#3fd22a" opacity="0.7"/>
<rect x="463.7" y="385.50" width="1" height="25.20" fill="#3fd22a" opacity="0.7"/>
<rect x="233.9" y="385.50" width="1" height="25.20" fill="#3fd22a" opacity="0.7"/>
<rect x="231.6" y="385.50" width="1" height="25.20" fill="#3fd22a" opacity="0.7"/>
<rect x="256.4" y="385.50" width="1" height="25.20" fill="#3fd22a" opacity="0.7"/>
<rect x="380.3" y="385.50" width="1" height="25.20" fill="#3fd22a" opacity="0.7"/>
<rect x="486.1" y="385.50" width="1" height="25.20" fill="#3fd22a" opacity="0.7"/>
<rect x="412.2" y="385.50" width="1" height="25.20" fill="#3fd22a" opacity="0.7"/>
<rect x="480.3" y="385.50" width="1" height="25.20" fill="#3fd22a" opacity="0.7"/>
<rect x="218.3" y="385.50" width="1" height="25.20" fill="#3fd22a" opacity="0.7"/>
<rect x="200.8" y="385.50" width="1" height="25.20" fill="#3fd22a" opacity="0.7"/>
<rect x="467.6" y="385.50" width="1" height="25.20" fill="#3fd22a" opacity="0.7"/>
<rect x="310.0" y="385.50" width="1" height="25.20" fill="#3fd22a" opacity="0.7"/>
<rect x="448.2" y="385.50" width="1" height="25.20" fill="#3fd22a" opacity="0.7"/>
<rect x="321.0" y="385.50" width="1" height="25.20" fill="#3fd22a" opacity="0.7"/>
<path d="M194.6 348.0 L195.4 353.9 L196.4 354.2 L197.4 355.1 L198.4 354.8 L199.4 353.2 L200.4 353.5 L201.4 353.1 L202.4 354.2 L203.4 354.0 L203.8 348.8 L204.8 347.6 L205.9 345.1 L206.9 345.7 L208.0 345.5 L209.0 346.4 L209.6 348.8 L210.6 348.5 L211.5 348.8 L212.5 350.1 L213.4 348.0 L214.4 348.1 L215.3 350.4 L216.3 349.2 L217.2 348.4 L218.2 347.5 L219.1 347.9 L220.1 347.3 L221.0 349.4 L222.0 349.4 L223.0 350.3 L224.0 349.5 L225.0 349.1 L226.0 349.1 L227.0 351.3 L228.0 348.5 L229.0 350.1 L229.9 349.7 L230.9 349.9 L231.8 348.8 L232.7 349.2 L233.7 349.2 L234.6 348.2 L235.2 355.9 L236.1 355.6 L237.0 355.8 L237.9 355.1 L238.9 355.6 L239.8 355.5 L240.7 355.9 L241.6 356.7 L242.5 356.6 L243.4 355.2 L244.4 356.0 L245.3 355.7 L246.2 355.4 L246.6 348.8 L247.7 348.1 L248.7 348.2 L249.8 347.5 L250.8 347.8 L251.2 355.6 L252.1 356.8 L253.0 357.1 L253.9 356.6 L254.9 356.3 L255.8 356.2 L256.7 355.5 L257.6 354.4 L258.5 356.3 L259.4 355.9 L260.3 355.2 L261.2 354.9 L262.2 356.6 L263.1 354.1 L264.0 356.9 L264.9 355.9 L265.8 357.3 L266.7 354.7 L267.6 355.2 L268.5 354.8 L269.5 355.3 L270.4 354.9 L271.3 354.5 L272.2 355.0 L272.6 349.9 L273.6 348.3 L274.7 348.5 L275.7 349.4 L276.7 348.5 L277.7 348.5 L278.8 349.1 L279.8 348.8 L280.2 355.3 L281.1 354.6 L282.0 355.5 L282.9 355.4 L283.8 356.9 L284.7 354.7 L285.6 356.3 L286.5 354.9 L287.4 355.3 L288.3 355.3 L289.2 355.8 L290.1 356.2 L291.1 356.9 L292.0 355.0 L292.9 356.6 L293.8 356.3 L294.7 356.2 L295.6 354.9 L296.5 356.2 L297.4 355.4 L298.3 355.8 L299.2 355.3 L300.1 356.0 L301.0 356.4 L301.9 356.4 L302.8 355.3 L303.7 356.3 L304.6 356.6 L305.5 354.7 L306.4 356.6 L307.3 354.4 L308.2 355.9 L309.1 355.9 L310.1 356.6 L311.0 355.7 L311.9 355.1 L312.8 354.8 L313.7 354.4 L314.6 356.0 L315.5 355.2 L316.4 354.8 L317.3 355.8 L318.2 354.8 L319.1 355.1 L320.0 355.0 L320.9 356.7 L321.8 356.5 L322.7 355.2 L323.6 354.1 L324.5 355.5 L325.5 355.3 L326.4 355.6 L327.3 355.7 L328.2 355.0 L329.1 356.0 L330.0 355.9 L330.9 355.4 L331.8 354.8 L332.7 354.8 L333.6 355.7 L334.5 354.2 L335.5 355.0 L336.4 354.5 L337.3 353.9 L338.2 355.5 L339.1 355.0 L340.0 355.0 L340.9 355.6 L341.8 353.6 L342.8 354.6 L343.7 354.8 L344.6 355.1 L345.5 353.5 L346.5 354.8 L347.4 354.3 L348.3 355.1 L349.2 354.8 L350.2 354.3 L351.1 355.4 L352.0 353.6 L352.9 353.2 L353.9 353.1 L354.8 352.5 L355.7 353.2 L356.6 351.6 L357.6 352.9 L358.5 353.2 L359.4 353.6 L360.4 352.4 L361.3 353.7 L362.2 352.0 L363.1 352.3 L364.1 350.8 L365.0 351.6 L365.9 351.5 L366.9 353.3 L367.8 352.5 L368.8 351.1 L369.7 352.4 L370.6 352.3 L371.6 351.7 L372.5 351.8 L373.4 351.5 L374.4 351.3 L375.3 350.3 L376.2 351.5 L377.2 352.6 L378.1 352.6 L379.1 351.2 L380.0 350.8 L380.9 351.2 L381.8 352.1 L382.8 351.7 L383.7 350.9 L384.6 351.7 L385.5 351.2 L386.5 351.8 L387.4 351.1 L388.3 350.3 L389.2 351.4 L390.2 352.0 L391.1 350.5 L392.0 351.3 L392.9 351.9 L393.9 350.8 L394.8 350.4 L395.7 352.3 L396.7 351.2 L397.6 350.4 L398.4 337.2 L400.0 335.8 L401.0 334.9 L402.0 337.5 L403.0 335.5 L403.9 336.5 L404.9 337.6 L405.8 338.2 L406.8 336.6 L407.7 336.9 L408.7 337.7 L409.6 336.2 L410.6 338.3 L411.5 338.3 L412.4 337.7 L413.4 338.6 L414.3 338.9 L415.3 338.6 L416.2 338.9 L417.2 339.8 L418.1 338.4 L419.1 339.0 L420.0 338.6 L420.9 339.9 L421.8 338.8 L422.7 339.6 L423.6 339.4 L424.5 339.4 L425.5 340.7 L426.4 339.4 L427.3 340.6 L428.2 340.2 L429.1 340.7 L430.0 339.6 L430.9 340.5 L431.8 340.4 L432.7 339.4 L433.6 340.2 L434.5 339.9 L435.5 340.1 L436.4 341.2 L437.3 339.7 L438.2 339.0 L439.1 339.0 L440.0 340.1 L440.9 340.0 L441.8 340.6 L442.8 341.1 L443.7 342.1 L444.6 341.0 L445.5 341.2 L446.5 340.4 L447.4 341.5 L448.3 342.1 L449.2 342.2 L450.2 339.7 L451.1 342.0 L452.0 341.4 L453.0 341.0 L453.9 340.5 L454.9 338.7 L455.8 339.7 L456.8 340.4 L457.7 340.3 L458.7 339.4 L459.6 339.4 L460.6 340.9 L461.5 339.2 L462.4 341.3 L463.4 340.3 L464.3 340.6 L465.3 339.4 L466.2 340.0 L467.2 341.0 L468.1 339.4 L469.1 342.2 L470.0 339.5 L470.9 339.8 L471.8 340.9 L472.7 341.3 L473.6 341.6 L474.5 340.9 L475.5 341.1 L476.4 341.2 L477.3 341.0 L478.2 339.6 L479.1 342.4 L480.0 341.8 L481.0 340.4 L481.9 340.4 L482.8 339.8 L483.7 340.5 L484.6 340.3 L485.5 340.3 L486.4 341.3 L487.3 339.1 L488.2 340.7 L489.1 339.7 L490.0 340.3 L491.0 341.8 L491.9 339.8 L492.8 340.6 L493.7 340.3 L494.6 341.5 L495.5 340.1 L496.4 339.6 L497.3 341.3 L498.2 340.7 L499.1 340.7 L500.0 341.8 L500.9 340.4 L501.8 340.8 L502.7 341.3 L503.6 341.5 L504.5 340.9 L505.5 342.1 L506.4 343.1 L507.3 341.1 L508.2 342.9 L509.1 339.9 L510.0 342.7 L510.9 341.4 L511.8 341.8 L512.7 341.5 L513.6 341.3 L514.5 340.9 L515.5 341.6 L516.4 343.0 L517.3 342.9 L518.2 341.8 L519.1 341.7 L520.0 341.7 L520.9 341.3 L521.8 343.6 L522.7 342.8 L523.6 342.4 L524.6 341.9 L525.5 341.6 L526.4 343.4 L527.3 343.0 L528.2 341.7 L529.1 343.2 L530.0 341.6 L531.0 343.0 L531.9 341.8 L532.8 342.2 L533.7 343.0 L534.6 342.6 L535.2 345.7 L536.2 346.2 L537.1 344.8 L538.1 346.6 L539.0 346.4 L540.0 345.4 L541.0 345.8 L541.9 344.8 L542.9 345.3 L543.8 344.4 L544.8 345.5 L545.8 345.6 L546.7 346.4 L547.7 346.1 L548.6 346.0 L549.6 345.4" stroke="#4a9292" stroke-width="1.05" fill="none" stroke-linejoin="round"/>
<rect x="550" y="284.7" width="1.5" height="126" fill="#f00000"/>
<path d="M194.4 128.1 V254.7 M193.8 128.7 H629 M628.4 128.1 V254.7" stroke="#000" stroke-width="1.2" fill="none"/>
<path d="M191 229.50 H194.4 M191 204.30 H194.4 M191 179.10 H194.4 M191 153.90 H194.4 M191 128.70 H194.4 M628.4 238.95 H632 M628.4 223.20 H632 M628.4 207.45 H632 M628.4 191.70 H632 M628.4 175.95 H632 M628.4 160.20 H632 M628.4 144.45 H632 M628.4 128.70 H632 M194.70 254.7 V256.5 M238.10 254.7 V256.5 M281.50 254.7 V256.5 M324.90 254.7 V256.5 M368.30 254.7 V256.5 M411.70 254.7 V256.5 M455.10 254.7 V256.5 M498.50 254.7 V256.5 M541.90 254.7 V256.5 M585.30 254.7 V256.5 M628.70 254.7 V256.5" stroke="#111" stroke-width="1" fill="none"/>
<path d="M194.4 284.1 V410.7 M193.8 284.7 H629 M628.4 284.1 V410.7" stroke="#000" stroke-width="1.2" fill="none"/>
<path d="M191 398.10 H194.4 M191 385.50 H194.4 M191 372.90 H194.4 M191 360.30 H194.4 M191 347.70 H194.4 M191 335.10 H194.4 M191 322.50 H194.4 M191 309.90 H194.4 M191 297.30 H194.4 M191 284.70 H194.4 M194.70 410.7 V412.5 M238.10 410.7 V412.5 M281.50 410.7 V412.5 M324.90 410.7 V412.5 M368.30 410.7 V412.5 M411.70 410.7 V412.5 M455.10 410.7 V412.5 M498.50 410.7 V412.5 M541.90 410.7 V412.5 M585.30 410.7 V412.5 M628.70 410.7 V412.5" stroke="#111" stroke-width="1" fill="none"/>
<rect x="196" y="118" width="6" height="8.2" fill="#0a800a"/>
<rect x="298" y="118" width="6.2" height="8.2" fill="#ebebeb"/>
<rect x="196" y="274" width="6" height="8.2" fill="#0a800a"/>
<rect x="224" y="274" width="6" height="8.2" fill="#3f8282"/>
<rect x="259" y="271" width="6" height="2.6" fill="#000"/>
</svg>
<span class="t" style="left:260.4px;top:8.3px;font-size:15px;color:#1a1a1a;letter-spacing:-0.106px;">Opti Drive Control 1.70</span>
<span class="t" style="left:13.6px;top:33.6px;font-size:11.5px;color:#6a6a6a;letter-spacing:-0.323px;">File</span>
<span class="t" style="left:45.2px;top:33.6px;font-size:11.5px;color:#6a6a6a;letter-spacing:-0.024px;">Start test</span>
<span class="t" style="left:105.4px;top:33.6px;font-size:11.5px;color:#6a6a6a;transform-origin:0 0;transform:scaleX(0.9015);">Extra</span>
<span class="t" style="left:144.4px;top:33.6px;font-size:11.5px;color:#6a6a6a;letter-spacing:0.155px;">Help</span>
<span class="t" style="left:14.4px;top:65.8px;font-size:11px;font-weight:bold;letter-spacing:-0.207px;">Drive</span>
<span class="t" style="left:89.4px;top:66.8px;font-size:11px;letter-spacing:-0.385px;">(M:)</span>
<span class="t" style="left:117.0px;top:66.8px;font-size:11px;letter-spacing:-0.338px;">ATAPI iHBS212</span>
<span class="t" style="left:199.0px;top:66.8px;font-size:11px;letter-spacing:-0.324px;">2 HL05</span>
<span class="t" style="left:378.0px;top:65.8px;font-size:11px;font-weight:bold;letter-spacing:-0.315px;">Speed</span>
<span class="t" style="left:427.4px;top:66.8px;font-size:11px;transform-origin:0 0;transform:scaleX(0.9187);">2.0 X</span>
<span class="t" style="left:14.4px;top:97.8px;font-size:11px;font-weight:bold;transform-origin:0 0;transform:scaleX(0.8860);">Disc</span>
<span class="t" style="left:14.4px;top:123.8px;font-size:11px;letter-spacing:-0.417px;">Type</span>
<span class="t" style="left:14.4px;top:139.8px;font-size:11px;letter-spacing:-0.069px;">MID</span>
<span class="t" style="left:14.4px;top:156.8px;font-size:11px;letter-spacing:0.172px;">Length</span>
<span class="t" style="left:14.4px;top:172.8px;font-size:11px;letter-spacing:0.209px;">Contents</span>
<span class="t" style="left:14.4px;top:191.8px;font-size:11px;letter-spacing:-0.160px;">Label</span>
<span class="t" style="left:114.6px;top:123.8px;font-size:11px;color:#1b1b8f;letter-spacing:-0.356px;">BD-R DL</span>
<span class="t" style="left:71.4px;top:139.8px;font-size:11px;color:#1b1b8f;letter-spacing:-0.357px;">VERBATIMd (000)</span>
<span class="t" style="left:111.5px;top:156.8px;font-size:11px;color:#1b1b8f;letter-spacing:-0.225px;">41.10 GB</span>
<span class="t" style="left:134.0px;top:172.8px;font-size:11px;color:#1b1b8f;letter-spacing:0.251px;">data</span>
<span class="t" style="left:196.6px;top:96.1px;font-size:14px;font-weight:bold;color:#fff;letter-spacing:0.122px;">Disc quality</span>
<span class="t" style="left:205.4px;top:114.4px;font-size:10.5px;transform-origin:0 0;transform:scaleX(0.9326);">LDC</span>
<span class="t" style="left:238.2px;top:114.4px;font-size:10.5px;letter-spacing:-0.046px;">Read speed</span>
<span class="t" style="left:307.3px;top:114.4px;font-size:10.5px;letter-spacing:0.139px;">Write speed</span>
<span class="t" style="left:205.6px;top:270.2px;font-size:10.5px;transform-origin:0 0;transform:scaleX(0.8502);">BIS</span>
<span class="t" style="left:233.4px;top:270.2px;font-size:10.5px;letter-spacing:-0.103px;">Jitter</span>
<span class="t" style="left:257.6px;top:429.2px;font-size:11px;transform-origin:0 0;transform:scaleX(0.8630);">LDC</span>
<span class="t" style="left:315.6px;top:429.2px;font-size:11px;transform-origin:0 0;transform:scaleX(0.8684);">BIS</span>
<span class="t" style="left:168.4px;top:445.8px;font-size:11px;letter-spacing:-0.226px;">Avg</span>
<span class="t" style="left:168.6px;top:461.8px;font-size:11px;letter-spacing:0.008px;">Max</span>
<span class="t" style="left:166.4px;top:477.8px;font-size:11px;letter-spacing:0.211px;">Total</span>
<span class="t" style="left:257.6px;top:445.8px;font-size:11px;color:#1b1b8f;letter-spacing:-0.292px;">5.10</span>
<span class="t" style="left:260.4px;top:461.8px;font-size:11px;color:#1b1b8f;letter-spacing:-0.304px;">468</span>
<span class="t" style="left:235.6px;top:477.8px;font-size:11px;color:#1b1b8f;letter-spacing:-0.281px;">3436812</span>
<span class="t" style="left:311.0px;top:445.8px;font-size:11px;color:#1b1b8f;letter-spacing:-0.121px;">0.08</span>
<span class="t" style="left:326.4px;top:461.8px;font-size:11px;color:#1b1b8f;transform-origin:0 0;transform:scaleX(0.9143);">8</span>
<span class="t" style="left:302.4px;top:477.8px;font-size:11px;color:#1b1b8f;letter-spacing:-0.310px;">53133</span>
<span class="t" style="left:422.0px;top:429.8px;font-size:11px;letter-spacing:0.210px;">Jitter</span>
<span class="t" style="left:423.4px;top:445.8px;font-size:11px;color:#1b1b8f;letter-spacing:-0.422px;">9.9%</span>
<span class="t" style="left:418.0px;top:461.8px;font-size:11px;color:#1b1b8f;letter-spacing:-0.306px;">11.9%</span>
<span class="t" style="left:466.6px;top:433.8px;font-size:11px;letter-spacing:-0.181px;">Speed</span>
<span class="t" style="left:466.6px;top:461.8px;font-size:11px;letter-spacing:0.221px;">Position</span>
<span class="t" style="left:466.6px;top:477.8px;font-size:11px;letter-spacing:-0.307px;">Samples</span>
<span class="t" style="left:525.0px;top:433.8px;font-size:11px;color:#1b1b8f;letter-spacing:-0.330px;">2.01 X</span>
<span class="t" style="left:525.0px;top:461.8px;font-size:11px;color:#1b1b8f;letter-spacing:-0.101px;">42081 MB</span>
<span class="t" style="left:525.0px;top:477.8px;font-size:11px;color:#1b1b8f;letter-spacing:-0.312px;">673261</span>
<span class="t" style="left:584.0px;top:431.8px;font-size:11px;transform-origin:0 0;transform:scaleX(0.9187);">2.0 X</span>
<span class="t" style="left:595.4px;top:455.8px;font-size:11px;letter-spacing:0.341px;">Start full</span>
<span class="t" style="left:592.0px;top:482.6px;font-size:11px;letter-spacing:0.289px;">Start part</span>
<span class="t" style="left:36.0px;top:487.2px;font-size:11px;transform-origin:0 0;transform:scaleX(1.0939);">Status window &gt;&gt;</span>
<span class="t" style="left:8.8px;top:507.6px;font-size:11px;letter-spacing:-0.206px;">Test completed</span>
<span class="t" style="left:459.4px;top:507.6px;font-size:11px;transform-origin:0 0;transform:scaleX(0.9005);">100.0%</span>
<span class="t" style="left:607.0px;top:507.6px;font-size:11px;letter-spacing:-0.118px;">83:03</span>
<span class="t" style="left:36.6px;top:222.5px;font-size:12.5px;color:#a4a4a4;transform-origin:0 0;transform:scaleX(0.8186);">Transfer rate</span>
<span class="t" style="left:36.6px;top:250.5px;font-size:12.5px;color:#a4a4a4;transform-origin:0 0;transform:scaleX(0.8406);">Create test disc</span>
<span class="t" style="left:36.6px;top:278.5px;font-size:12.5px;color:#a4a4a4;transform-origin:0 0;transform:scaleX(0.8375);">Verify test disc</span>
<span class="t" style="left:36.6px;top:306.5px;font-size:12.5px;color:#a4a4a4;transform-origin:0 0;transform:scaleX(0.8239);">Drive info</span>
<span class="t" style="left:36.6px;top:334.5px;font-size:12.5px;color:#a4a4a4;transform-origin:0 0;transform:scaleX(0.8344);">Disc info</span>
<span class="t" style="left:36.6px;top:362.5px;font-size:12.5px;color:#fff;transform-origin:0 0;transform:scaleX(0.8354);">Disc quality</span>
<span class="t" style="left:36.6px;top:390.5px;font-size:12.5px;color:#a4a4a4;transform-origin:0 0;transform:scaleX(0.8454);">CD Bler</span>
<span class="t" style="left:36.6px;top:418.5px;font-size:12.5px;color:#a4a4a4;transform-origin:0 0;transform:scaleX(0.8780);">FE / TE</span>
<span class="t" style="left:36.6px;top:446.5px;font-size:12.5px;color:#a4a4a4;transform-origin:0 0;transform:scaleX(0.8129);">Extra tests</span>
<span class="t" style="left:187.9px;top:254.4px;font-size:10.4px;letter-spacing:-0.261px;">0.0</span>
<span class="t" style="left:231.1px;top:254.4px;font-size:10.4px;letter-spacing:-0.261px;">5.0</span>
<span class="t" style="left:271.4px;top:254.4px;font-size:10.4px;letter-spacing:-0.181px;">10.0</span>
<span class="t" style="left:314.6px;top:254.4px;font-size:10.4px;letter-spacing:-0.181px;">15.0</span>
<span class="t" style="left:357.8px;top:254.4px;font-size:10.4px;letter-spacing:-0.181px;">20.0</span>
<span class="t" style="left:400.9px;top:254.4px;font-size:10.4px;letter-spacing:-0.181px;">25.0</span>
<span class="t" style="left:444.1px;top:254.4px;font-size:10.4px;letter-spacing:-0.181px;">30.0</span>
<span class="t" style="left:487.3px;top:254.4px;font-size:10.4px;letter-spacing:-0.181px;">35.0</span>
<span class="t" style="left:530.5px;top:254.4px;font-size:10.4px;letter-spacing:-0.181px;">40.0</span>
<span class="t" style="left:573.7px;top:254.4px;font-size:10.4px;letter-spacing:-0.181px;">45.0</span>
<span class="t" style="left:607.6px;top:254.4px;font-size:10.4px;letter-spacing:-0.019px;">50.0 GB</span>
<span class="t" style="left:187.9px;top:410.4px;font-size:10.4px;letter-spacing:-0.261px;">0.0</span>
<span class="t" style="left:231.1px;top:410.4px;font-size:10.4px;letter-spacing:-0.261px;">5.0</span>
<span class="t" style="left:271.4px;top:410.4px;font-size:10.4px;letter-spacing:-0.181px;">10.0</span>
<span class="t" style="left:314.6px;top:410.4px;font-size:10.4px;letter-spacing:-0.181px;">15.0</span>
<span class="t" style="left:357.8px;top:410.4px;font-size:10.4px;letter-spacing:-0.181px;">20.0</span>
<span class="t" style="left:400.9px;top:410.4px;font-size:10.4px;letter-spacing:-0.181px;">25.0</span>
<span class="t" style="left:444.1px;top:410.4px;font-size:10.4px;letter-spacing:-0.181px;">30.0</span>
<span class="t" style="left:487.3px;top:410.4px;font-size:10.4px;letter-spacing:-0.181px;">35.0</span>
<span class="t" style="left:530.5px;top:410.4px;font-size:10.4px;letter-spacing:-0.181px;">40.0</span>
<span class="t" style="left:573.7px;top:410.4px;font-size:10.4px;letter-spacing:-0.181px;">45.0</span>
<span class="t" style="left:607.6px;top:410.4px;font-size:10.4px;letter-spacing:-0.019px;">50.0 GB</span>
<span class="t" style="left:173.6px;top:222.3px;font-size:10.4px;letter-spacing:0.023px;">100</span>
<span class="t" style="left:173.6px;top:197.1px;font-size:10.4px;letter-spacing:0.023px;">200</span>
<span class="t" style="left:173.6px;top:171.9px;font-size:10.4px;letter-spacing:0.023px;">300</span>
<span class="t" style="left:173.6px;top:146.7px;font-size:10.4px;letter-spacing:0.023px;">400</span>
<span class="t" style="left:173.6px;top:121.5px;font-size:10.4px;letter-spacing:0.023px;">500</span>
<span class="t" style="left:632.0px;top:231.7px;font-size:10.4px;letter-spacing:-0.244px;">1 X</span>
<span class="t" style="left:632.0px;top:216.0px;font-size:10.4px;letter-spacing:-0.244px;">2 X</span>
<span class="t" style="left:632.0px;top:200.2px;font-size:10.4px;letter-spacing:-0.244px;">3 X</span>
<span class="t" style="left:632.0px;top:184.5px;font-size:10.4px;letter-spacing:-0.244px;">4 X</span>
<span class="t" style="left:632.0px;top:168.7px;font-size:10.4px;letter-spacing:-0.244px;">5 X</span>
<span class="t" style="left:632.0px;top:153.0px;font-size:10.4px;letter-spacing:-0.244px;">6 X</span>
<span class="t" style="left:632.0px;top:137.2px;font-size:10.4px;letter-spacing:-0.244px;">7 X</span>
<span class="t" style="left:632.0px;top:121.5px;font-size:10.4px;letter-spacing:-0.244px;">8 X</span>
<span class="t" style="left:185.0px;top:390.9px;font-size:10.4px;letter-spacing:0.219px;">1</span>
<span class="t" style="left:185.0px;top:378.3px;font-size:10.4px;letter-spacing:0.219px;">2</span>
<span class="t" style="left:185.0px;top:365.7px;font-size:10.4px;letter-spacing:0.219px;">3</span>
<span class="t" style="left:185.0px;top:353.1px;font-size:10.4px;letter-spacing:0.219px;">4</span>
<span class="t" style="left:185.0px;top:340.5px;font-size:10.4px;letter-spacing:0.219px;">5</span>
<span class="t" style="left:185.0px;top:327.9px;font-size:10.4px;letter-spacing:0.219px;">6</span>
<span class="t" style="left:185.0px;top:315.3px;font-size:10.4px;letter-spacing:0.219px;">7</span>
<span class="t" style="left:185.0px;top:302.7px;font-size:10.4px;letter-spacing:0.219px;">8</span>
<span class="t" style="left:185.0px;top:290.1px;font-size:10.4px;letter-spacing:0.219px;">9</span>
<span class="t" style="left:179.4px;top:277.5px;font-size:10.4px;letter-spacing:0.025px;">10</span>
<span class="t" style="left:631.6px;top:378.8px;font-size:10.4px;letter-spacing:-0.154px;">4%</span>
<span class="t" style="left:631.6px;top:353.6px;font-size:10.4px;letter-spacing:-0.154px;">8%</span>
<span class="t" style="left:631.6px;top:328.4px;font-size:10.4px;letter-spacing:-0.119px;">12%</span>
<span class="t" style="left:631.6px;top:303.2px;font-size:10.4px;letter-spacing:-0.119px;">16%</span>
<span class="t" style="left:631.6px;top:278.0px;font-size:10.4px;letter-spacing:-0.119px;">20%</span>
</body></html>
